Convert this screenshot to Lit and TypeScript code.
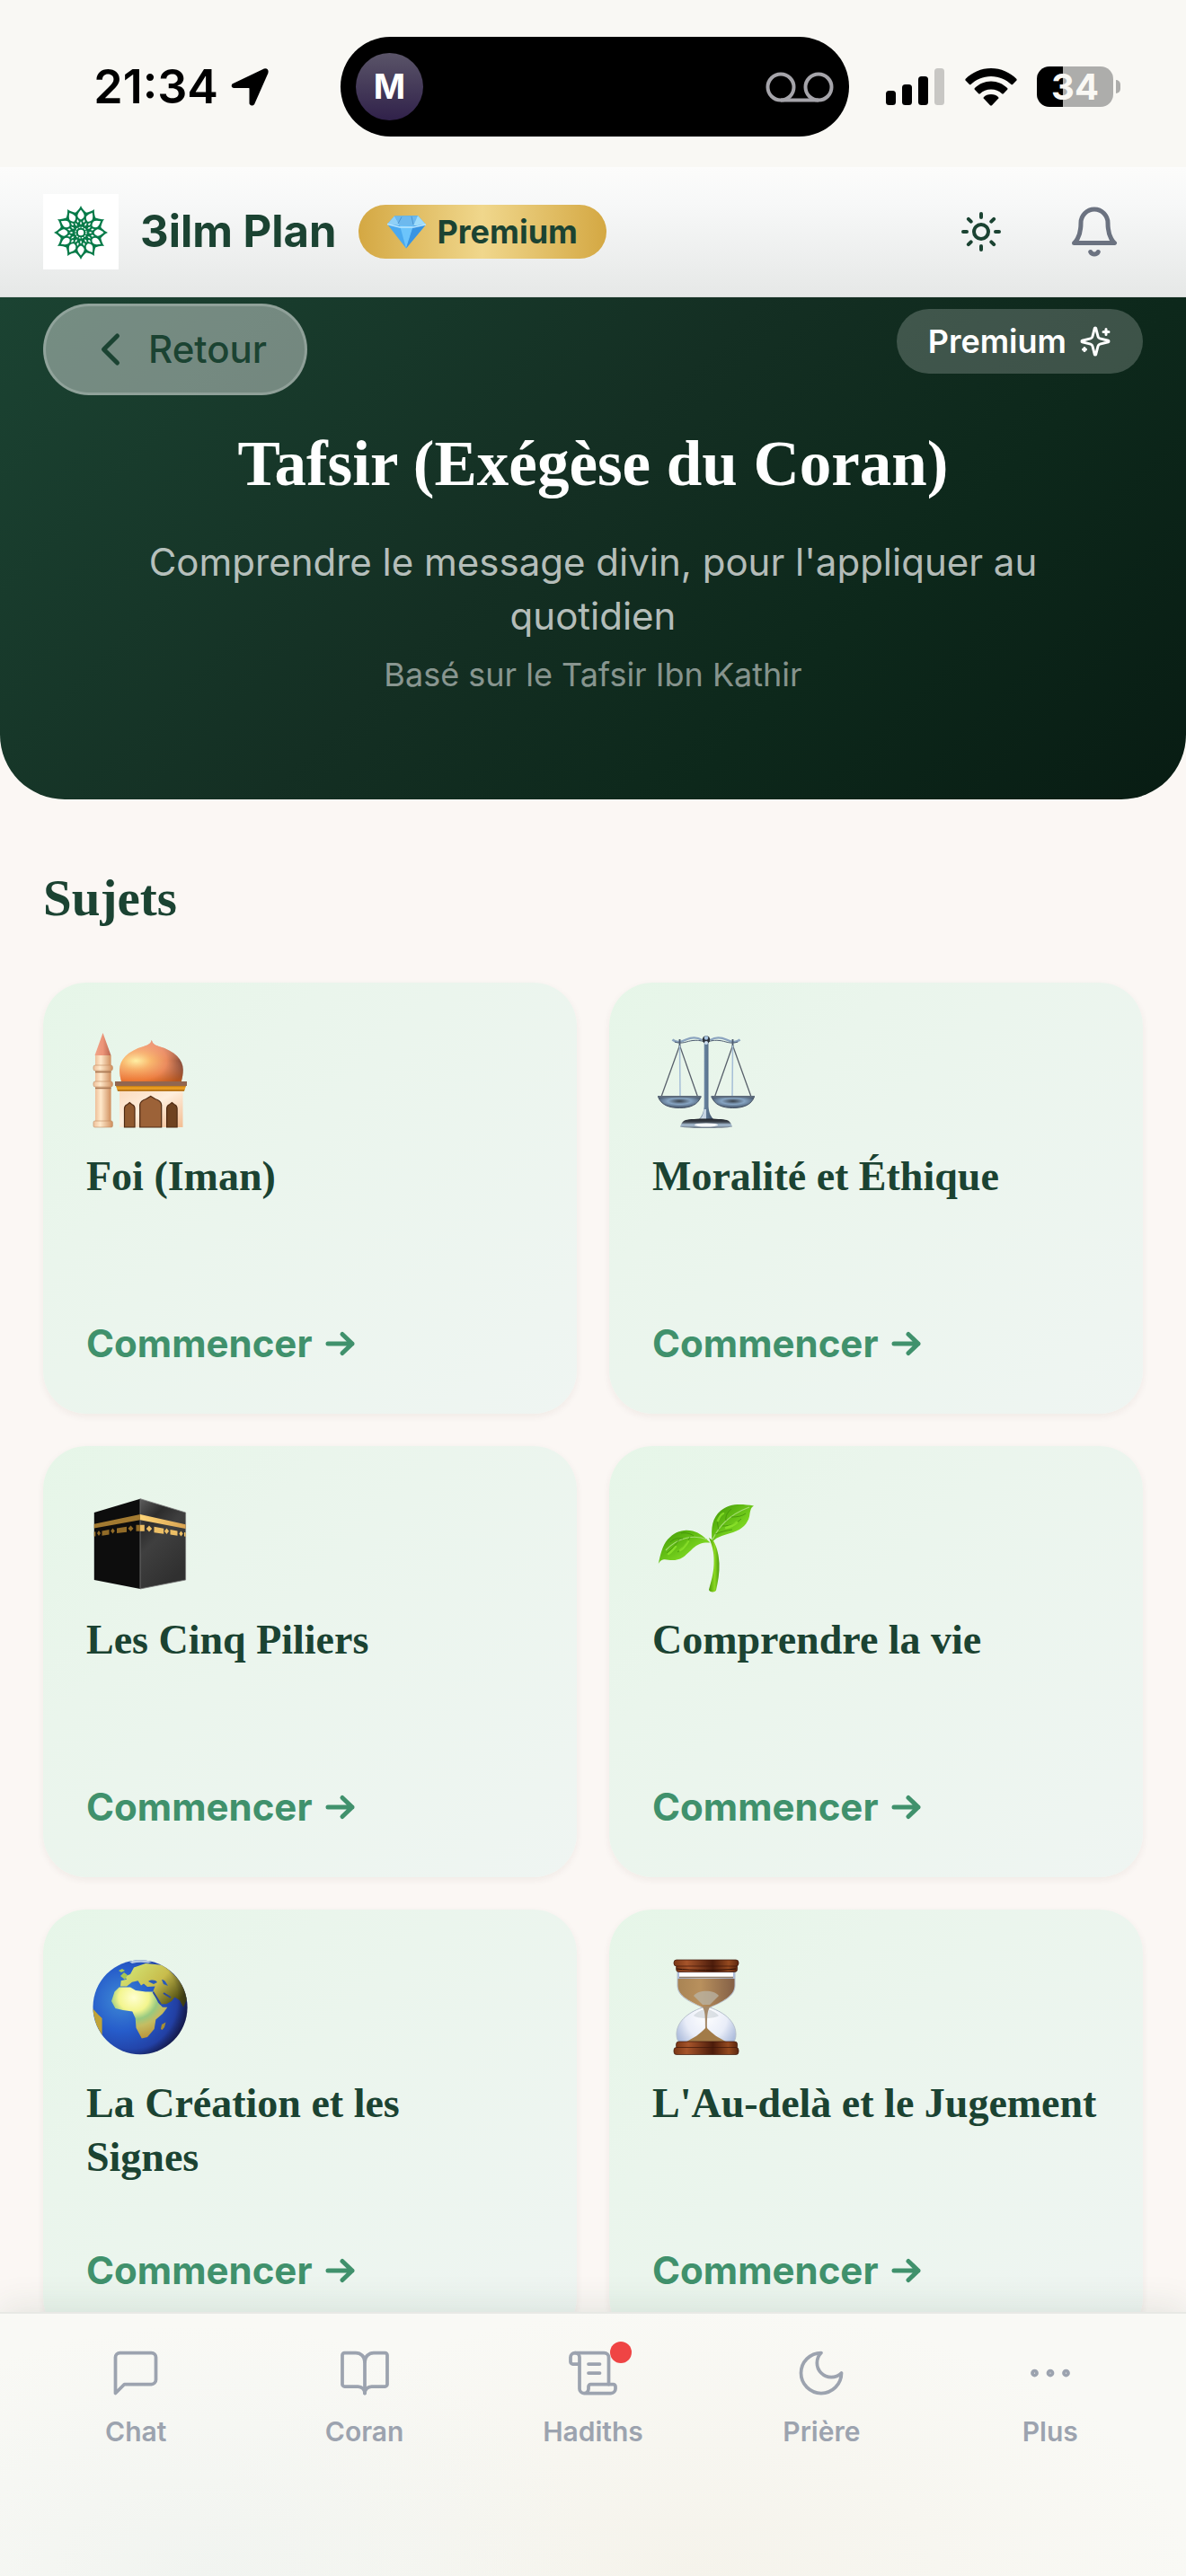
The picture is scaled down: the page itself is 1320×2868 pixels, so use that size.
import { LitElement, html, css, svg, nothing } from "lit";
import { customElement, property, state } from "lit/decorators.js";

/* ---------- line icons, drawn on a 24 unit grid ---------- */

const icons = {
  sun: svg`<circle cx="12" cy="12" r="4"/><path d="M12 2v2M12 20v2M4.93 4.93l1.41 1.41M17.66 17.66l1.41 1.41M2 12h2M20 12h2M6.34 17.66l-1.41 1.41M19.07 4.93l-1.41 1.41"/>`,
  bell: svg`<path d="M6 8a6 6 0 0 1 12 0c0 7 3 9 3 9H3s3-2 3-9"/><path d="M10.3 21a1.94 1.94 0 0 0 3.4 0"/>`,
  back: svg`<path d="m15 18-6-6 6-6"/>`,
  sparkles: svg`<path d="M9.94 15.5A2 2 0 0 0 8.5 14.06l-6.14-1.58a.5.5 0 0 1 0-.96L8.5 9.94A2 2 0 0 0 9.94 8.5l1.58-6.14a.5.5 0 0 1 .96 0l1.58 6.14a2 2 0 0 0 1.44 1.44l6.14 1.58a.5.5 0 0 1 0 .96l-6.14 1.58a2 2 0 0 0-1.44 1.44l-1.58 6.14a.5.5 0 0 1-.96 0z"/><path d="M20 3v4M22 5h-4M4 17v2M5 18H3"/>`,
  chat: svg`<path d="M21 15a2 2 0 0 1-2 2H7l-4 4V5a2 2 0 0 1 2-2h14a2 2 0 0 1 2 2z"/>`,
  book: svg`<path d="M12 7v14"/><path d="M3 18a1 1 0 0 1-1-1V4a1 1 0 0 1 1-1h5a4 4 0 0 1 4 4 4 4 0 0 1 4-4h5a1 1 0 0 1 1 1v13a1 1 0 0 1-1 1h-6a3 3 0 0 0-3 3 3 3 0 0 0-3-3z"/>`,
  scroll: svg`<path d="M15 12h-5M15 8h-5M19 17V5a2 2 0 0 0-2-2H4"/><path d="M8 21h12a2 2 0 0 0 2-2v-1a1 1 0 0 0-1-1H11a1 1 0 0 0-1 1v1a2 2 0 1 1-4 0V5a2 2 0 1 0-4 0v2a1 1 0 0 0 1 1h3"/>`,
  moon: svg`<path d="M12 3a6 6 0 0 0 9 9 9 9 0 1 1-9-9Z"/>`,
  more: svg`<circle cx="12" cy="12" r="1"/><circle cx="19" cy="12" r="1"/><circle cx="5" cy="12" r="1"/>`,
};

type IconName = keyof typeof icons;

const icon = (name: IconName, size: number, stroke = 2) => html`
  <svg width=${size} height=${size} viewBox="0 0 24 24" fill="none" stroke="currentColor"
    stroke-width=${stroke} stroke-linecap="round" stroke-linejoin="round" aria-hidden="true">${icons[name]}</svg>`;

/* ---------- topic pictures, drawn on a 120 unit grid ---------- */

const pictures = {
  mosque: svg`
    <defs>
      <radialGradient id="dome" cx=".26" cy=".5" r=".8">
        <stop offset="0" stop-color="#fff0a4"/><stop offset=".28" stop-color="#f9b96c"/>
        <stop offset=".6" stop-color="#ea8a5c"/><stop offset="1" stop-color="#63342a"/>
      </radialGradient>
      <linearGradient id="glow" x1="0" y1="0" x2="0" y2="1">
        <stop offset="0" stop-color="#f4a287" stop-opacity=".8"/><stop offset=".5" stop-color="#f4a287" stop-opacity="0"/>
        <stop offset="1" stop-color="#f06a10" stop-opacity=".6"/>
      </linearGradient>
      <linearGradient id="shaft"><stop offset="0" stop-color="#eec09a"/><stop offset=".35" stop-color="#ffe9cb"/><stop offset="1" stop-color="#d08f5e"/></linearGradient>
      <linearGradient id="cone"><stop offset="0" stop-color="#f0a488"/><stop offset=".5" stop-color="#ec9478"/><stop offset="1" stop-color="#b8664e"/></linearGradient>
      <linearGradient id="wall" x1="0" y1="0" x2="1" y2="1"><stop offset="0" stop-color="#fbdcc0"/><stop offset=".45" stop-color="#ffeedd"/><stop offset="1" stop-color="#f3bd92"/></linearGradient>
      <linearGradient id="gold" x1="0" y1="0" x2="0" y2="1"><stop offset="0" stop-color="#c07a14"/><stop offset=".4" stop-color="#f2a422"/><stop offset="1" stop-color="#a86a18"/></linearGradient>
    </defs>
    <path d="M18.5 8 27.5 33h-18z" fill="url(#cone)"/>
    <path d="M10 33h17.6v80H10z" fill="url(#shaft)"/>
    <g fill="url(#shaft)" stroke="#c08a60" stroke-width=".6">
      <rect x="8" y="44" width="21.4" height="6" rx="2"/><rect x="8" y="62" width="21.4" height="6" rx="2"/><rect x="8" y="106" width="21.4" height="7" rx="1.5"/>
    </g>
    <path d="M10 51.500h17.600M10 69.500h17.600" stroke="#a87650" stroke-width="1.500"/>
    <path d="M72.800 16c1 4 3 5 8 7 18 5 27 15 27 26 0 5-1 9-2 13H39c-1-4-2-8-2-13 0-11 9-21 27-26 5-2 8-3 8.800-7z" fill="url(#dome)"/>
    <path d="M72.800 16c1 4 3 5 8 7 18 5 27 15 27 26 0 5-1 9-2 13H39c-1-4-2-8-2-13 0-11 9-21 27-26 5-2 8-3 8.800-7z" fill="url(#glow)"/>
    <path d="M32 62h80v5H32z" fill="#916650"/><path d="M33 67h78l-2 6H35z" fill="url(#gold)"/>
    <path d="M37 73h70.500v40H37z" fill="url(#wall)"/>
    <g fill="#90592f" stroke="#4f2a12" stroke-width="1.200">
      <path d="M42.500 113V92q.3-3.500 3.500-4.500l2.300-2 2.300 2q3.200 1 3.400 4.500v21z"/>
      <path d="M59.700 113V88q.5-4.500 7-6.500l5-3 5 3q6.500 2 7 6.500v25z" fill="#9c6238"/>
      <path d="M89.600 113V92q.3-3.500 3.400-4.500l2.400-2 2.400 2q3 1 3.300 4.500v21z" fill="#6f4220"/>
    </g>`,
  scales: svg`
    <defs>
      <linearGradient id="steel"><stop offset="0" stop-color="#9cacba"/><stop offset=".45" stop-color="#64809c"/><stop offset="1" stop-color="#3c4c62"/></linearGradient>
      <radialGradient id="pan" cx=".5" cy=".4" r=".6"><stop offset="0" stop-color="#39414a"/><stop offset=".45" stop-color="#86a4c2"/><stop offset="1" stop-color="#3f4e62"/></radialGradient>
      <linearGradient id="foot" x1="0" y1="0" x2="0" y2="1"><stop offset="0" stop-color="#1f2329"/><stop offset=".35" stop-color="#3c434c"/><stop offset=".65" stop-color="#a9bfd4"/><stop offset="1" stop-color="#6c7783"/></linearGradient>
    </defs>
    <path d="M22.400 15.500c4 3.500 9 3 15 0 8-3.500 14-2 18 .5M97.600 15.500c-4 3.500-9 3-15 0-8-3.500-14-2-18 .5" fill="none" stroke="#8ba4bf" stroke-width="2.400"/>
    <path d="M25 18c8 3 14-1 20-1.500s8 0 12 1M95 18c-8 3-14-1-20-1.500s-8 0-12 1" fill="none" stroke="#4d5b70" stroke-width="1"/>
    <path d="M30.500 15v8M89.500 15v8" stroke="#4c5b70" stroke-width="1.800"/>
    <path d="M30.500 22 10 79M30.500 22 50.500 79M89.500 22 69.500 79M89.500 22 110 79" stroke="#59616c" stroke-width="1.300"/>
    <path d="M30.500 22 31 79M89.500 22 89 79" stroke="#a5bed7" stroke-width="1.500"/>
    <g fill="url(#pan)" stroke="#475364" stroke-width="1"><path d="M6.500 79h47.500c-3 9-12 12.500-23.700 12.500S9.500 88 6.500 79z"/><path d="M66 79h47.500c-3 9-12 12.500-23.700 12.500S69 88 66 79z"/></g>
    <path d="M6 79h48.500M65.500 79H114" stroke="#5e6c7c" stroke-width="2"/>
    <path d="M57.700 18h4.800v72c.5 7 2.500 11 6.500 15H51c4-4 6-8 6.700-15z" fill="url(#steel)"/>
    <path d="M57.500 93c-.5 5-2 9-4.500 11h7V93z" fill="#e6f0fa" opacity=".75"/>
    <circle cx="60" cy="15.500" r="4.300" fill="#2d343d"/><circle cx="60" cy="13.500" r="2.200" fill="#a9c6e3"/><circle cx="60" cy="19" r="2" fill="#cfe0f2"/>
    <path d="M37 105c8-2 38-2 46 0 3 1 5 4 6 7.500-10 2-48 2-58 0 1-3.500 3-6.500 6-7.500z" fill="url(#foot)"/>
    <ellipse cx="60" cy="110.500" rx="13" ry="2" fill="#fff" opacity=".9"/>`,
  kaaba: svg`
    <defs>
      <linearGradient id="side" x1="0" y1="0" x2=".5" y2="1"><stop offset="0" stop-color="#5c5c5c"/><stop offset=".28" stop-color="#2c2c2c"/><stop offset=".5" stop-color="#3f3f3f"/><stop offset="1" stop-color="#303030"/></linearGradient>
      <linearGradient id="trim"><stop offset="0" stop-color="#ffd678"/><stop offset="1" stop-color="#d9a352"/></linearGradient>
    </defs>
    <path d="M8.800 26 60 10.700V111L8.800 101z" fill="#0d0d0d"/>
    <path d="M60 10.700 110.600 26v75L60 111z" fill="url(#side)"/>
    <path d="M60 10.700 110.600 26v75L60 111" fill="none" stroke="#777" stroke-width=".8"/><path d="M60 10.700V111" stroke="#6b6b6b" stroke-width="1"/>
    <path d="M8.800 38.700 60 28v6.200L8.800 43.500z" fill="#a27a31"/>
    <path d="M60 28l50.600 11.300V44L60 34.200z" fill="url(#trim)"/>
    <g fill="#916b28"><path d="M17.500 46.500l8-1.500v5.500l-8 1.200zM34 43.500l11-1.800v6L34 49zM8.800 47.500l1.600-.3v5.200l-1.600.2zM14 46l2 3-2 3-2-3zM29.500 43.500l2.300 3-2.300 3-2.300-3zM49.500 40.500l3 3.200-3 3.200-3-3.200zM55.500 39.700H60v7h-4.500z"/></g>
    <g fill="#edbf66"><path d="M60 39.700h4.800v7H60zM70 40.500l3.200 3.500-3.200 3.500-3.200-3.500zM75.500 41.700l10.700 2v6l-10.700-1.500zM89.500 43.500l2.600 3.300-2.600 3.200-2.600-3.200zM93.500 45l8 1.500v5.200l-8-1.200zM105.500 46.500l2.200 3-2.200 3-2.200-3zM109 48l1.600.3v4.500l-1.600-.3z"/></g>`,
  seedling: svg`
    <defs>
      <linearGradient id="leafA" x1="0" y1="0" x2="1" y2="1"><stop offset="0" stop-color="#3f9406"/><stop offset=".4" stop-color="#62bd14"/><stop offset=".65" stop-color="#7bd521"/><stop offset="1" stop-color="#347c06"/></linearGradient>
      <linearGradient id="stem"><stop offset="0" stop-color="#4b9c05"/><stop offset=".55" stop-color="#8bd822"/><stop offset="1" stop-color="#4e9c0b"/></linearGradient>
    </defs>
    <path d="M63 54c5 11 6 20 5.500 30-.5 11-3 18-5.500 28 .5 3 7 3.200 8 .5 2-9 4-19 3.500-30-.5-9-2-17-6.500-25z" fill="url(#stem)"/>
    <path d="M66.600 58.700C65 42 67 32 76 24c10-8 21-8 37-5.500-4 2-4 7-5 12-2 8-8 14-18 17.500-9 3-17 4-23.400 10.700z" fill="url(#leafA)"/>
    <path d="M64.500 59.500C56 59 51 60.500 45 66c-8 8-13 13-22 13-6 .5-12-4-16.200 4C9 73 11 63 17 56c8-9 18-12 28-9.500 8 2 13 7 19.500 13z" fill="url(#leafA)"/>
    <g fill="none" stroke="#a5dc72" stroke-width="1.200"><path d="M67 56C74 42 84 29 108 20"/><path d="M61 56C46 50 28 54 15 68"/></g>
    <g fill="none" stroke="#3d8a08" stroke-width="1" opacity=".7"><path d="M74 45c-2-7-2-12 1-17M82 35c-1-5 2-10 6-13M78 41c9 0 16-3 21-8M88 31c7 0 12-1 16-4M70 50c7-3 13-4 19-5M46 52c-4-3-10-4-14-3M34 55c-6-1-10 0-14 4M42 53c-3 7-9 14-14 17M30 56c-4 6-8 11-14 15"/></g>
    <g fill="none" stroke="#93ea2f" stroke-width="2.500" stroke-linecap="round" opacity=".7"><path d="M73 35q2-6 6-8M82 43q8-2 12-6M26 64q-5 6-8 8M40 58q-4 7-9 10"/></g>`,
  globe: svg`
    <defs>
      <radialGradient id="sea" cx=".3" cy=".42" r=".75"><stop offset="0" stop-color="#3f8ad6"/><stop offset=".45" stop-color="#265cca"/><stop offset=".78" stop-color="#2240a4"/><stop offset="1" stop-color="#191c50"/></radialGradient>
      <radialGradient id="landA" cx=".4" cy=".2" r=".85"><stop offset="0" stop-color="#ffffd0"/><stop offset=".32" stop-color="#f3f58e"/><stop offset=".5" stop-color="#98c980"/><stop offset=".66" stop-color="#c4bd62"/><stop offset="1" stop-color="#b98f35"/></radialGradient>
      <linearGradient id="landB" x1="0" y1="0" x2="1" y2=".6"><stop offset="0" stop-color="#d5ec7a"/><stop offset=".6" stop-color="#c8bc4c"/><stop offset="1" stop-color="#4c4a10"/></linearGradient>
      <clipPath id="ball"><circle cx="60" cy="60.700" r="52.500"/></clipPath>
      <radialGradient id="shade" cx=".4" cy=".44" r=".66"><stop offset=".76" stop-color="#0a0c28" stop-opacity="0"/><stop offset="1" stop-color="#0a0c28" stop-opacity=".55"/></radialGradient>
    </defs>
    <circle cx="60" cy="60.700" r="52.500" fill="url(#sea)"/>
    <g clip-path="url(#ball)" stroke-linejoin="round">
      <path d="M38 37.600 38.700 31.300 45 29.800 43 26.400 49 24 53 16.600 66 12 87 14 103 30 114 48 108 60.700 104 53 98.400 49.500 95 54 89 57.200 83 57.200 74.500 42.500 76.600 37.600 68 38 64 34.500 61 36.500 57.600 31.300 51 32.800 45 37.600z" fill="url(#landB)"/>
      <path d="M28 54 31.500 43.500 36.600 38.600 49 38.500 55 42 66 43.500 74.500 43.500 80 55.800 85 60.700 90.400 60.700 85 68 77.400 74.400 75.700 85 68 94 61.800 95.400 55.500 83.700 54.700 73 51.300 65.600 40.800 64 32.400 62z" fill="url(#landA)"/>
      <path d="M69 32c3-2 8-2 10 1l-4 2zM84 30c4 0 5 4 7 7l-5-2z" fill="#2b5bb8"/>
      <path d="M38 26l4-4 4 3-3 5zM36 20l4-2 3 2-4 2z" fill="#a7c653"/>
      <path d="M83 85 84 80 88.500 77.500 87 83 84.500 86z" fill="#a79034"/>
      <path d="M6 61 13.400 69 17.600 73 17.600 92.500 11 80z" fill="#c0a337"/>
      <path d="M74.500 44 83 57.500" stroke="#2a489c" stroke-width="1.800"/>
      <path d="M86 45l8 5" stroke="#2a489c" stroke-width="2"/>
      <path d="M48 10c8-3 17-3 25 0l-4 1.500c-6-1-12-1-18 .5z" fill="#dce8ec" opacity=".8"/>
    </g>
    <circle cx="60" cy="60.700" r="52.500" fill="url(#shade)"/>`,
  hourglass: svg`
    <defs>
      <linearGradient id="wood"><stop offset="0" stop-color="#7a3716"/><stop offset=".2" stop-color="#a6542a"/><stop offset=".6" stop-color="#4c1c0b"/><stop offset=".85" stop-color="#94491f"/><stop offset="1" stop-color="#5c2710"/></linearGradient>
      <linearGradient id="sand"><stop offset="0" stop-color="#a98454"/><stop offset=".4" stop-color="#b8905d"/><stop offset="1" stop-color="#846046"/></linearGradient>
      <radialGradient id="glass" cx=".5" cy=".6" r=".6"><stop offset="0" stop-color="#fff"/><stop offset=".6" stop-color="#e9edf8"/><stop offset="1" stop-color="#a9b9da"/></radialGradient>
    </defs>
    <path d="M28 20h64v16c0 12-10 17-28 25 18 6 29 17 29 30 0 4-1 7-3 9H30c-2-2-3-5-3-9 0-13 11-24 29-30-18-8-28-13-28-25z" fill="url(#glass)" stroke="#b6c0cc" stroke-width="1"/>
    <path d="M28.500 29h63v7c0 11-10 17-27 24.500h-9C38.500 53 28.500 47 28.500 36z" fill="url(#sand)"/>
    <path d="M46 48c5-7 23-7 28 0l-10 10h-8z" fill="#b9b4a6" opacity=".75"/>
    <path d="M30 22h60v5H30z" fill="#fff"/><path d="M30 27.500h60" stroke="#8f7a62" stroke-width="1.300"/>
    <path d="M46 70c5-5 9-6 14-8 5 2 9 3 14 8-4 4-24 4-28 0z" fill="#b9c0c8" opacity=".45"/>
    <path d="M55.500 60h9c-3 5-3.500 8-3.500 24h-2c0-16-.5-19-3.500-24z" fill="#a58a6b"/>
    <path d="M36 100c10-5 17-9 24-17 7 8 14 12 24 17z" fill="#a27b48"/>
    <g stroke="#3c1608" stroke-width=".7"><rect x="26.600" y="13" width="68" height="8.500" rx="3" fill="url(#wood)"/><rect x="24" y="8" width="72" height="7" rx="3" fill="url(#wood)"/>
    <rect x="26.600" y="99" width="68" height="8.500" rx="3" fill="url(#wood)"/><rect x="24" y="105.500" width="72" height="8" rx="3" fill="url(#wood)"/></g>
    <path d="M27 18c15 2 50 2 66 0" fill="none" stroke="#2c0f05" stroke-width="1"/>`,
};

type PictureName = keyof typeof pictures;

interface Topic {
  title: string;
  picture: PictureName;
}

const topics: Topic[] = [
  { title: "Foi (Iman)", picture: "mosque" },
  { title: "Moralité et Éthique", picture: "scales" },
  { title: "Les Cinq Piliers", picture: "kaaba" },
  { title: "Comprendre la vie", picture: "seedling" },
  { title: "La Création et les\nSignes", picture: "globe" },
  { title: "L'Au-delà et le Jugement", picture: "hourglass" },
];

const tabs: { label: string; icon: IconName; alert?: boolean }[] = [
  { label: "Chat", icon: "chat" },
  { label: "Coran", icon: "book" },
  { label: "Hadiths", icon: "scroll", alert: true },
  { label: "Prière", icon: "moon" },
  { label: "Plus", icon: "more" },
];

/* ---------- phone status bar ---------- */

@customElement("status-bar")
export class StatusBar extends LitElement {
  static styles = css`
    :host {
      display: grid;
      grid-template-columns: 1fr 566px 1fr;
      align-items: center;
      padding: 41px 0 34px 4px;
      background: #f9f8f4;
      color: #000;
    }
    .left { display: flex; align-items: center; justify-content: flex-end; gap: 13px; padding-right: 79px; }
    .time { font-size: 52px; line-height: 60px; font-weight: 600; }
    .island {
      display: flex;
      align-items: center;
      justify-content: space-between;
      height: 111px;
      padding: 0 17px;
      box-sizing: border-box;
      border-radius: 56px;
      background: #000;
    }
    .avatar {
      width: 75px;
      height: 75px;
      border-radius: 50%;
      background: linear-gradient(#5a5468, #30214a);
      color: #fff;
      font-size: 38px;
      line-height: 75px;
      font-weight: 700;
      text-align: center;
    }
    .right { display: flex; align-items: center; gap: 22px; padding-left: 41px; }
    .battery { display: flex; align-items: center; gap: 3px; }
    .cell {
      width: 85px;
      height: 45px;
      border-radius: 14px;
      background: linear-gradient(90deg, #000 34%, #adadab 34%);
      color: #f9f8f4;
      font-size: 40px;
      line-height: 45px;
      font-weight: 700;
      text-align: center;
    }
    .nub { width: 5px; height: 15px; border-radius: 0 5px 5px 0; background: #adadab; }
  `;

  render() {
    return html`
      <div class="left">
        <span class="time">21:34</span>
        <svg width="44" height="44" viewBox="0 0 44 44" aria-hidden="true">
          <path d="M3.500 19.500 38 3q4-1 3 3L26 40q-1.500 2-3 0V23.500q0-2-2-2H4.500q-2-.5-1-2z" stroke="#000" stroke-width="3" stroke-linejoin="round"/>
        </svg>
      </div>
      <div class="island">
        <span class="avatar">M</span>
        <svg width="76" height="36" viewBox="0 0 76 36" fill="none" stroke="#a5a4aa" stroke-width="4" aria-hidden="true">
          <circle cx="17" cy="18" r="14.500"/><circle cx="59" cy="18" r="14.500"/><path d="M17 32.500h42"/>
        </svg>
      </div>
      <div class="right">
        <svg width="66" height="42" viewBox="0 0 66 42" aria-hidden="true">
          <rect x="0" y="25" width="11" height="16" rx="3.500"/><rect x="18" y="18" width="11" height="23" rx="3.500"/>
          <rect x="36" y="9" width="11" height="32" rx="3.500"/><rect x="54" y="0" width="11" height="41" rx="3.500" fill="#c8c7c4"/>
        </svg>
        <svg width="58" height="42" viewBox="0 0 58 42" aria-hidden="true">
          <path d="M29 0C18 0 8 4.500.5 12l-.2 1.200 4.900 5 1 0C12.500 12.500 20 9 29 9s16.500 3.500 22.800 9.200h1l4.900-5-.2-1.200C50 4.500 40 0 29 0z"/>
          <path d="M29 14.500c-7 0-13 2.800-18.400 7.700v1.200l4.800 5h1.200C20 25.300 24.300 23.500 29 23.500s9 1.800 12.400 4.900h1.200l4.800-5v-1.200C42 17.300 36 14.500 29 14.500z"/>
          <path d="M29 29c-3.500 0-6 1.200-8.300 3.200v1.200L28.200 41.500h1.600l7.500-8.100v-1.200C35 30.200 32.500 29 29 29z"/>
        </svg>
        <div class="battery"><span class="cell">34</span><span class="nub"></span></div>
      </div>
    `;
  }
}

/* ---------- application header ---------- */

@customElement("app-header")
export class AppHeader extends LitElement {
  static styles = css`
    :host {
      display: flex;
      align-items: center;
      justify-content: space-between;
      padding: 30px 48px;
      border-bottom: 1px solid #d9dbda;
      background: linear-gradient(#fcfcfb, #f7f8f8 28%, #e6e8e7);
    }
    svg { display: block; }
    .brand { display: flex; align-items: center; gap: 24px; }
    .logo { background: #fff; }
    .name { margin: 0; font-size: 49px; line-height: 60px; font-weight: 700; color: #1b4332; }
    .badge {
      display: flex;
      align-items: center;
      gap: 12px;
      padding: 6px 32px;
      border-radius: 30px;
      background: linear-gradient(90deg, #d4a843, #f0d78c 50%, #d4a843);
      color: #1b4332;
      font-size: 36px;
      line-height: 48px;
      font-weight: 700;
    }
    .actions { display: flex; gap: 18px; }
    .action {
      display: grid;
      place-items: center;
      width: 108px;
      height: 84px;
      padding: 0;
      border: 0;
      background: none;
      color: #6b7280;
      cursor: pointer;
    }
    .theme { color: #1b4332; }
  `;

  render() {
    const turns = Array.from({ length: 12 }, (_, i) => i * 30);
    return html`
      <div class="brand">
        <svg class="logo" width="84" height="84" viewBox="-42 -43 84 84" aria-hidden="true">
          ${turns.map(
            (a) => svg`<path transform=${`rotate(${a})`} d="M0-30Q1.500-26 6.800-21.500L4-9H-4L-6.800-21.500Q-1.500-26 0-30z" fill="#067a48"/>`
          )}
          <circle r="11" fill="#067a48"/>
          ${turns.map(
            (a) => svg`<g transform=${`rotate(${a})`} fill="#fff">
              <path d="M0-25.500Q4.300-20.500 3.600-18 2.500-15 0-14.500-2.500-15-3.600-18-4.300-20.500 0-25.500z"/>
              <path d="M0-12.800 1-10.500 0-8.500-1-10.500z"/>
              <path d="M0-15.500 1.200-13 0-11.500-1.200-13z" transform="rotate(15)"/>
            </g>`
          )}
          <circle r="6" fill="none" stroke="#fff" stroke-width="1.200" stroke-dasharray="2 1.140"/>
          <circle r="3.200" fill="#fff"/>
        </svg>
        <h1 class="name">3ilm Plan</h1>
        <span class="badge">
          <svg width="44" height="38" viewBox="0 0 44 38" aria-hidden="true">
            <path d="M0 10.500 8 1.500 34 1 43 11 21 37.500z" fill="#4aa9ef"/>
            <path d="M8 1.500 14 12 0 10.500z" fill="#8fd0f7"/><path d="M8 1.500h26L29 12.500 14 12z" fill="#6db9ee"/>
            <path d="M34 1 43 11 29 12.500z" fill="#9fdcfb"/><path d="M14 12 29 12.500 21 37.500z" fill="#6cc4fb"/>
            <path d="M29 12.500 43 11 21 37.500z" fill="#3894e2"/><path d="M0 10.500 14 14l15 0 14-3" fill="none" stroke="#b9e6ff" stroke-width="1.500"/>
            <path d="M16 2.500 12 10M27 2l2 9" stroke="#4c95cf" stroke-width="1"/>
          </svg>
          Premium
        </span>
      </div>
      <div class="actions">
        <button class="action theme" type="button" aria-label="Thème">${icon("sun", 48)}</button>
        <button class="action" type="button" aria-label="Notifications">${icon("bell", 60)}</button>
      </div>
    `;
  }
}

/* ---------- topic card ---------- */

@customElement("topic-card")
export class TopicCard extends LitElement {
  @property({ attribute: false }) topic!: Topic;

  static styles = css`
    :host { display: block; }
    .card {
      display: flex;
      flex-direction: column;
      box-sizing: border-box;
      min-height: 480px;
      padding: 48px;
      border-radius: 48px;
      background: linear-gradient(135deg, #e6f6e8, #eaf5ec 30%, #eff5f2);
      box-shadow: 0 3px 9px rgba(60, 30, 20, 0.06);
      color: #1b4332;
      text-decoration: none;
    }
    .picture { display: block; }
    .title {
      margin: 18px 0 0;
      font-family: "Liberation Serif", serif;
      font-size: 46px;
      line-height: 60px;
      font-weight: 700;
      white-space: pre-line;
    }
    .start {
      display: flex;
      align-items: center;
      gap: 14px;
      margin-top: auto;
      color: #40916c;
      font-size: 42px;
      line-height: 60px;
      font-weight: 700;
    }
  `;

  render() {
    return html`
      <a class="card" href="#sujet">
        <svg class="picture" width="120" height="120" viewBox="0 0 120 120" aria-hidden="true">${pictures[this.topic.picture]}</svg>
        <h3 class="title">${this.topic.title}</h3>
        <span class="start">
          Commencer
          <svg width="34" height="30" viewBox="0 0 34 30" fill="none" stroke="currentColor" stroke-width="5"
            stroke-linecap="round" stroke-linejoin="round" aria-hidden="true"><path d="M3 15h27M19 4.500 30 15 19 25.500"/></svg>
        </span>
      </a>
    `;
  }
}

/* ---------- bottom tab bar ---------- */

@customElement("tab-bar")
export class TabBar extends LitElement {
  static styles = css`
    :host {
      display: block;
      position: relative;
      padding: 36px 24px 142px;
      border-top: 2px solid #e8e9e5;
      background:
        radial-gradient(ellipse 440px 280px at 17% 100%, #f1f4f0, transparent),
        radial-gradient(ellipse 560px 300px at 58% 100%, #f5f3eb, transparent),
        #f9f9f5;
      box-shadow: 0 -6px 36px rgba(27, 67, 50, 0.1);
    }
    .tabs { display: grid; grid-template-columns: repeat(5, 1fr); }
    .tab {
      display: flex;
      flex-direction: column;
      align-items: center;
      gap: 16px;
      color: #9ca3af;
      font-size: 30px;
      line-height: 38px;
      font-weight: 600;
      text-decoration: none;
    }
    .glyph { position: relative; width: 60px; height: 60px; }
    .glyph svg { display: block; }
    .dot {
      position: absolute;
      top: -5px;
      right: -13px;
      width: 24px;
      height: 24px;
      border-radius: 50%;
      background: #ef4444;
    }
  `;

  render() {
    return html`
      <nav class="tabs">
        ${tabs.map(
          (tab) => html`
            <a class="tab" href="#onglet">
              <span class="glyph">${icon(tab.icon, 60, 1.5)}${tab.alert ? html`<span class="dot"></span>` : nothing}</span>
              <span>${tab.label}</span>
            </a>
          `
        )}
      </nav>
    `;
  }
}

/* ---------- page ---------- */

@customElement("app-root")
export class AppRoot extends LitElement {
  @state() private topics = topics;

  static styles = css`
    :host {
      display: flex;
      flex-direction: column;
      height: 100vh;
      background: #fbf7f4;
      font-family: Inter, "Liberation Sans", sans-serif;
    }
    .content { flex: 1; min-height: 0; overflow-y: auto; scrollbar-width: none; }
    .hero {
      padding: 7px 48px 112px;
      border-radius: 0 0 72px 72px;
      background: linear-gradient(135deg, #1b4332, #142f23 45%, #0d281b 70%, #081c13);
      color: #fff;
      text-align: center;
    }
    .bar { display: flex; align-items: flex-start; justify-content: space-between; }
    .back {
      display: flex;
      align-items: center;
      gap: 12px;
      padding: 18px 42px;
      border: 3px solid rgba(255, 255, 255, 0.2);
      border-radius: 51px;
      background: rgba(255, 255, 255, 0.4);
      color: #1b4332;
      font-family: inherit;
      font-size: 42px;
      line-height: 60px;
      font-weight: 500;
      cursor: pointer;
    }
    .back svg { display: block; }
    .chip {
      display: flex;
      align-items: center;
      gap: 14px;
      margin-top: 6px;
      padding: 12px 35px;
      border-radius: 36px;
      background: rgba(255, 255, 255, 0.2);
      font-size: 36px;
      line-height: 48px;
      font-weight: 600;
    }
    .heading {
      margin: 31px 0 35px;
      font-family: "Liberation Serif", serif;
      font-size: 71px;
      line-height: 90px;
      font-weight: 700;
    }
    .lead { margin: 0 auto; padding: 0 84px; font-size: 42px; line-height: 60px; color: rgba(255, 255, 255, 0.7); }
    .source { margin: 8px 0 0; font-size: 36px; line-height: 54px; color: rgba(255, 255, 255, 0.5); }
    .topics { padding: 74px 48px 48px; }
    .section {
      margin: 0 0 58px;
      color: #1b4332;
      font-family: "Liberation Serif", serif;
      font-size: 57px;
      line-height: 72px;
      font-weight: 700;
    }
    .grid { display: grid; grid-template-columns: 1fr 1fr; gap: 36px; }
  `;

  render() {
    return html`
      <status-bar></status-bar>
      <app-header></app-header>
      <main class="content">
        <section class="hero">
          <div class="bar">
            <button class="back" type="button">${icon("back", 60)}Retour</button>
            <span class="chip">Premium ${icon("sparkles", 36)}</span>
          </div>
          <h2 class="heading">Tafsir (Exégèse du Coran)</h2>
          <p class="lead">Comprendre le message divin, pour l'appliquer au quotidien</p>
          <p class="source">Basé sur le Tafsir Ibn Kathir</p>
        </section>
        <section class="topics">
          <h2 class="section">Sujets</h2>
          <div class="grid">${this.topics.map((t) => html`<topic-card .topic=${t}></topic-card>`)}</div>
        </section>
      </main>
      <tab-bar></tab-bar>
    `;
  }
}
